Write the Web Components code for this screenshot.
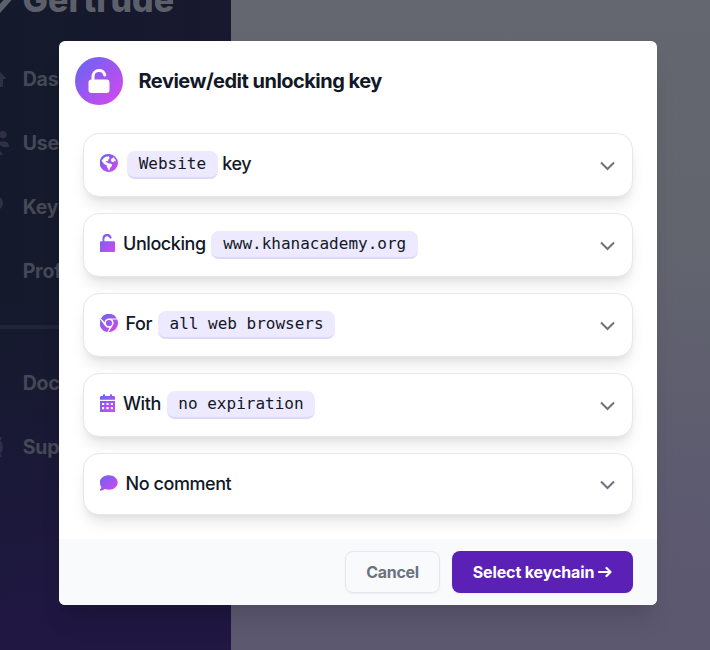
<!DOCTYPE html>
<html lang="en">
<head>
<meta charset="utf-8">
<title>Gertrude</title>
<style>
html,body{margin:0;width:710px;height:650px;overflow:hidden}
body{font-family:Inter,"Liberation Sans",sans-serif;color:#111827;-webkit-font-smoothing:antialiased}
</style>
</head>
<body>
<app-shell>
  <side-bar slot="side">
    <nav-item icon="home">Dashboard</nav-item>
    <nav-item icon="users">Users</nav-item>
    <nav-item icon="key">Keychains</nav-item>
    <nav-item>Profile</nav-item>
    <nav-item slot="lower">Docs</nav-item>
    <nav-item slot="lower" icon="help">Support</nav-item>
  </side-bar>
  <modal-dialog heading="Review/edit unlocking key">
    <summary-card icon="globe"><value-chip>Website</value-chip> <span>key</span></summary-card>
    <summary-card icon="unlock"><span>Unlocking</span> <value-chip>www.khanacademy.org</value-chip></summary-card>
    <summary-card icon="chrome"><span>For</span> <value-chip>all web browsers</value-chip></summary-card>
    <summary-card icon="calendar"><span>With</span> <value-chip>no expiration</value-chip></summary-card>
    <summary-card icon="comment" short><span>No comment</span></summary-card>
    <action-button slot="actions">Cancel</action-button>
    <action-button slot="actions" primary>Select keychain</action-button>
  </modal-dialog>
</app-shell>
<script>
const NAV = {
  home: '<path d="M-13 9L-3 0L6 9Q6 10 5 10H3V17Q3 18 2 18H-2V12H-5V18H-11V9Z"/>',
  users: '<circle cx="3" cy="1.500" r="3.700"/><path d="M-3 16Q-5 9 1 8.500H5Q9 9 9 14H3Q1 12 -1 12Z"/><circle cx="-4" cy="8" r="3.800"/><path d="M-12 24V21Q-12 17-6 17H-3Q3 18 3 24Z"/>',
  key: '<circle cx="-4" cy="6" r="7"/>',
  help: '<circle cx="-7" cy="10" r="10"/><path d="M-1 0L2 0L1 3L-1 3ZM-1 17L1 17L2 20L-1 20Z"/>'
};
const CARD = {
  globe: [18, '<path fill-rule="evenodd" d="M9 0A9 9 0 0 1 9 18C5.200 18 1.800 15.700 0 12V6A9 9 0 0 1 9 0ZM1.600 6.800L4.300 10.200L6.900 11.300Q6.400 12.600 7.300 13.600L8.300 15.100V16.400L9.600 15.800L10.300 13.600L12 12V10.600L10.600 9.500H8.600L7 8.300L5.600 8.200L6 7.300L7.500 6.900L8.200 7.300L8.100 5.900L9.400 4.500V3L8 1.900L7.400 2.800L6.100 2.400Q3.200 3.600 1.600 6.800ZM11.300 4.900L13.400 3.200L15.300 5.200L16 7.200L14.300 6.900L13.300 8.300L11.800 7.700L10.800 6.300Z"/>'],
  unlock: [15, '<path d="M1.200 7.200H2.500V4.800A4.600 4.600 0 0 1 11.500 3.200Q11.900 4.500 10.900 4.800Q10 5 9.600 4A2.700 2.700 0 0 0 4.400 4.900V7.200H14Q15 7.200 15 8.300V17Q15 18 14 18H0V8.300Q0 7.200 1.200 7.200Z"/>'],
  chrome: [18, '<path d="M1 4.500A9 9 0 0 1 16.900 4.500H9.200A4.500 4.500 0 0 0 4.600 8.200ZM.1 5.300L4.500 11.200Q6.400 14.200 9.400 13.700L7.500 18A9 9 0 0 1 0 12ZM17.300 5.600A9 9 0 0 1 8.600 18L12.900 11.200Q14.500 8 12.300 5.600Z"/><circle cx="9" cy="9" r="3.100"/>'],
  calendar: [15, '<path fill-rule="evenodd" d="M3 .6Q4 .1 5 .6V2H10V.6Q11 .1 12 .6V2H14Q15 2.200 15 3.300V5.700H0V3.300Q0 2.200 1 2H3ZM0 7H15V18H0ZM2 9V11H4.200V9ZM6.400 9V11H8.600V9ZM10.800 9V11H13V9ZM2 13V15.200H4.200V13ZM6.400 13V15.200H8.600V13ZM10.800 13V15.200H13V13Z"/>'],
  comment: [18, '<path d="M9 1.200C14 1.200 17.700 4.500 17.700 8.500S14 15.700 9 15.700Q6.800 15.700 5 15Q2.800 16.700 0 16.700V15.600Q1.200 14.400 1.400 12.900Q0 11.500 0 9.700V6.600C1 3.400 4.700 1.200 9 1.200Z"/>']
};
const gradient = '<defs><linearGradient id="g" gradientUnits="userSpaceOnUse" x1="0" y1="0" x2="17" y2="18"><stop stop-color="#6366f1"/><stop offset="1" stop-color="#d946ef"/></linearGradient></defs>';
function define(name, render) {
  customElements.define(name, class extends HTMLElement {
    constructor() { super(); this.attachShadow({mode: 'open'}); }
    connectedCallback() { this.shadowRoot.innerHTML = render(this); }
  });
}
define('app-shell', () => `<style>
:host{display:grid;grid-template-columns:231px 1fr;width:710px;height:650px;position:relative;overflow:hidden}
.page{background:linear-gradient(180deg,#64676f 0,#62656e 35%,#5c5970 82%,#5c5870 100%)}
.overlay{position:absolute;inset:0;display:flex;justify-content:center;align-items:flex-start;padding-top:41px;left:6px}
</style><slot name="side"></slot><div class="page"></div><div class="overlay"><slot></slot></div>`);
define('side-bar', () => `<style>
:host{display:block;height:650px;overflow:hidden;background:linear-gradient(180deg,rgba(22,26,44,0) 0,rgba(22,26,44,0) 45%,#201743 100%),linear-gradient(90deg,#141a2b,#18182f)}
header{display:flex;height:47px;color:#5d606b}
header svg{width:22.500px;height:20px;flex:none}
h1{margin:-20.500px 0 0;font-size:34px;line-height:40px;font-weight:800;letter-spacing:-.05px}
nav{display:grid;grid-auto-rows:64px}
hr{border:0;height:4px;margin:22px 0 22px;background:#202339}
</style><header><svg viewBox="0 0 22.500 20"><path d="M-4 13L12 -5" stroke="currentColor" stroke-width="6"/></svg><h1>Gertrude</h1></header><nav><slot></slot></nav><hr><nav><slot name="lower"></slot></nav>`);
define('nav-item', el => `<style>
:host{display:flex;align-items:center;color:#454955;font-weight:700;font-size:19.500px;line-height:28px;letter-spacing:-.2px}
svg{width:22.700px;height:24px;flex:none;fill:#302f49}
</style><svg viewBox="0 -2 22 24" preserveAspectRatio="xMinYMid">${NAV[el.getAttribute('icon')] || ''}</svg><slot></slot>`);
define('modal-dialog', el => `<style>
:host{display:flex;flex-direction:column;width:598px;height:564px;background:#fff;border-radius:6px;overflow:hidden;box-shadow:0 20px 25px -5px rgba(0,0,0,.1),0 10px 10px -5px rgba(0,0,0,.04)}
header{display:flex;align-items:center;gap:15.500px;padding:16px 16px 0}
.badge{width:48px;height:48px;border-radius:50%;background:linear-gradient(135deg,#6366f1,#d946ef);display:flex;align-items:center;justify-content:center}
svg{width:30px;height:30px;fill:#fff;margin-right:1px}
h2{margin:0;font-size:20px;line-height:28px;font-weight:700;letter-spacing:-.52px}
main{flex:1;display:flex;flex-direction:column;gap:16px;padding:28px 24px 0}
footer{display:flex;justify-content:flex-end;gap:12px;padding:12px 24px;background:#f9fafb}
</style><header><div class="badge"><svg viewBox="0 0 20 20"><path d="M10 2a5 5 0 00-5 5v2a2 2 0 00-2 2v5a2 2 0 002 2h10a2 2 0 002-2v-5a2 2 0 00-2-2H7V7a3 3 0 015.905-.75 1 1 0 001.937-.5A5.002 5.002 0 0010 2z"/></svg></div><h2>${el.getAttribute('heading')}</h2></header><main><slot></slot></main><footer><slot name="actions"></slot></footer>`);
define('summary-card', el => {
  const [w, shape] = CARD[el.getAttribute('icon')];
  return `<style>
:host{display:flex;align-items:center;box-sizing:border-box;width:550px;height:64px;padding:0 14px 3px 16px;border:1px solid #e5e7eb;border-radius:16px;background:#fff;box-shadow:0 10px 15px -3px rgba(0,0,0,.1),0 4px 6px -2px rgba(0,0,0,.05)}
:host([short]){height:62px;padding-bottom:1px}
.icon{height:18px;flex:none;margin:0 8px 2px 0}
:host([icon=globe]) .icon{margin-right:9px}
:host([icon=comment]) .icon,:host([icon=chrome]) .icon{margin-right:7.500px}
.text{flex:1;display:flex;align-items:center;gap:5.800px;font-size:18px;line-height:28px;font-weight:500;letter-spacing:-.43px}
:host([icon=globe]) .text{gap:4.500px}
.chevron{width:20px;height:20px;position:relative;top:2px}
:host([short]) .chevron{top:1px}
</style><svg class="icon" style="width:${w}px" viewBox="0 0 ${w} 18">${gradient}<g fill="url(#g)">${shape}</g></svg><div class="text"><slot></slot></div><svg class="chevron" viewBox="0 0 20 20" fill="none" stroke="#6b7280" stroke-width="2"><path d="M3 6.500L9.500 13L16 6.500"/></svg>`;
});
define('value-chip', () => `<style>
:host{display:block;box-sizing:border-box;height:28px;margin-top:2px;padding:0 11.700px;border-bottom:2px solid #ddd6fe;border-radius:8px;background:#ede9fe;font:400 16px/25px "DejaVu Sans Mono","Liberation Mono",monospace;letter-spacing:0;white-space:pre}
</style><slot></slot>`);
define('action-button', el => `<style>
:host{display:flex;align-items:center;justify-content:center;box-sizing:border-box;width:95px;height:42px;border:1px solid #e5e7eb;border-radius:8px;color:#6b7280;font-size:16px;font-weight:700;letter-spacing:-.35px;box-shadow:0 1px 2px rgba(0,0,0,.05)}
:host([primary]){width:181px;border:0;background:#5b21b6;color:#fff;letter-spacing:-.12px}
svg{width:14px;height:12px;margin-left:4px}
</style><slot></slot>${el.hasAttribute('primary') ? '<svg viewBox="0 0 14 12" fill="none" stroke="#fff" stroke-width="2.200" stroke-linecap="round" stroke-linejoin="round"><path d="M1 6H12.500M8.500 2L12.500 6L8.500 10"/></svg>' : ''}`);
</script>
</body>
</html>
